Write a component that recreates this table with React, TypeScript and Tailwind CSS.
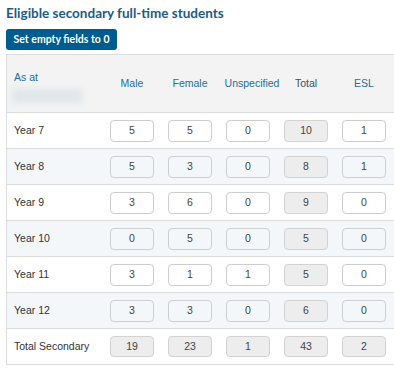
import React from 'react';

type Row = { label: string; values: number[]; total: number; esl: number };

const rows: Row[] = [
  { label: 'Year 7', values: [5, 5, 0], total: 10, esl: 1 },
  { label: 'Year 8', values: [5, 3, 0], total: 8, esl: 1 },
  { label: 'Year 9', values: [3, 6, 0], total: 9, esl: 0 },
  { label: 'Year 10', values: [0, 5, 0], total: 5, esl: 0 },
  { label: 'Year 11', values: [3, 1, 1], total: 5, esl: 0 },
  { label: 'Year 12', values: [3, 3, 0], total: 6, esl: 0 },
];

const Cell: React.FC<{ value: number; readOnly?: boolean; small?: boolean }> = ({ value, readOnly, small }) => (
  <div className="flex items-center justify-center">
    <div
      className={
        'w-[44px] rounded-[4px] border flex items-center justify-center text-[10.5px] text-[#444] ' +
        (small ? 'h-[21px] ' : 'h-[22px] ') +
        (readOnly ? 'bg-[#ededed] border-[#d2d2d2]' : 'bg-transparent border-[#cdcdcd]')
      }
    >
      {value}
    </div>
  </div>
);

export default function App() {
  return (
    <div className="w-[394px] h-[374px] overflow-hidden bg-white" style={{ fontFamily: '"Liberation Sans", Arial, sans-serif' }}>
      <h1
        className="pl-[6px] pt-[3px] h-[26px] text-[13.5px] font-bold text-[#1d5b85]"
        style={{ fontFamily: 'Lato, sans-serif' }}
      >
        Eligible secondary full-time students
      </h1>
      <div className="pl-[6px]">
        <button
          className="w-[111px] h-[21px] rounded-[3px] bg-[#005b8e] text-white text-[10.5px] font-bold"
          style={{ fontFamily: 'Lato, sans-serif' }}
        >
          Set empty fields to 0
        </button>
      </div>
      <div className="ml-[6px] mt-[4px] w-[388px] border-l border-[#dcdcdc]">
        <div className="grid grid-cols-[96px_58px_58px_58px_58px_58px] h-[59px] bg-[#f3f3f3] border-t border-b border-[#dcdcdc] text-[10.5px] text-[#2270a0]">
          <div className="pl-[7px] pt-[15px]">
            <div>As at</div>
            <div className="mt-[3px] ml-[-2px] w-[70px] h-[14px] bg-[#e0e6eb] blur-[3px]" />
          </div>
          <div className="flex items-center justify-center">Male</div>
          <div className="flex items-center justify-center">Female</div>
          <div className="flex items-center justify-center pl-[8px] whitespace-nowrap">Unspecified</div>
          <div className="flex items-center justify-center text-[#34506b]">Total</div>
          <div className="flex items-center justify-center">ESL</div>
        </div>
        {rows.map((r, i) => (
          <div
            key={r.label}
            className={
              'grid grid-cols-[96px_58px_58px_58px_58px_58px] h-[36px] border-b border-[#dcdcdc] text-[10.5px] text-[#333] ' +
              (i % 2 === 1 ? 'bg-[#f3f7fa]' : 'bg-white')
            }
          >
            <div className="flex items-center pl-[7px]">{r.label}</div>
            {r.values.map((v, j) => (
              <Cell key={j} value={v} />
            ))}
            <Cell value={r.total} readOnly />
            <Cell value={r.esl} />
          </div>
        ))}
        <div className="grid grid-cols-[96px_58px_58px_58px_58px_58px] h-[36px] border-b border-[#dcdcdc] text-[10.5px] text-[#333]">
          <div className="flex items-center pl-[7px] whitespace-nowrap">Total Secondary</div>
          {[19, 23, 1, 43, 2].map((v, j) => (
            <Cell key={j} value={v} readOnly small />
          ))}
        </div>
      </div>
    </div>
  );
}
